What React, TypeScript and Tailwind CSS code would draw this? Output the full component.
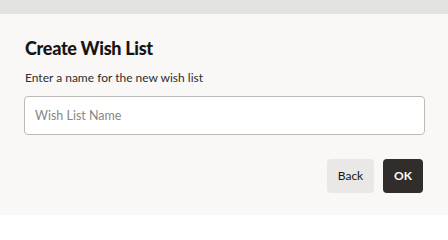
import React, { useState } from 'react'

export default function App() {
  const [name, setName] = useState('')

  return (
    <div className="w-[448px] h-[215px] flex flex-col bg-[#f9f8f6] overflow-hidden font-['Lato','Noto_Sans',sans-serif]">
      {/* blurred backdrop peeking above the dialog */}
      <div className="h-[14px] shrink-0 bg-[#e3e3e2]" />

      <div className="flex flex-col px-[25px] pt-[22px]">
        <h1 className="text-[18px] leading-[24px] font-black text-[#161513] tracking-[-0.3px]">
          Create Wish List
        </h1>
        <p className="mt-[10px] text-[12px] leading-[16px] text-[#2f2d2b]">
          Enter a name for the new wish list
        </p>

        <input
          value={name}
          onChange={(e) => setName(e.target.value)}
          placeholder="Wish List Name"
          className="mt-[10px] -ml-px h-[39px] w-[401px] rounded-[4px] border border-[#bdbab6] bg-white px-[10px] text-[12.5px] text-[#161513] placeholder:text-[#8a8784] outline-none"
        />

        <div className="mt-[24px] flex justify-end gap-[9px]">
          <button className="h-[34px] w-[47px] rounded-[4px] bg-[#e9e8e6] text-[12px] text-[#161513]">
            Back
          </button>
          <button className="h-[34px] w-[40px] rounded-[4px] bg-[#312d2a] text-[12px] font-bold text-white">
            OK
          </button>
        </div>
      </div>
    </div>
  )
}
